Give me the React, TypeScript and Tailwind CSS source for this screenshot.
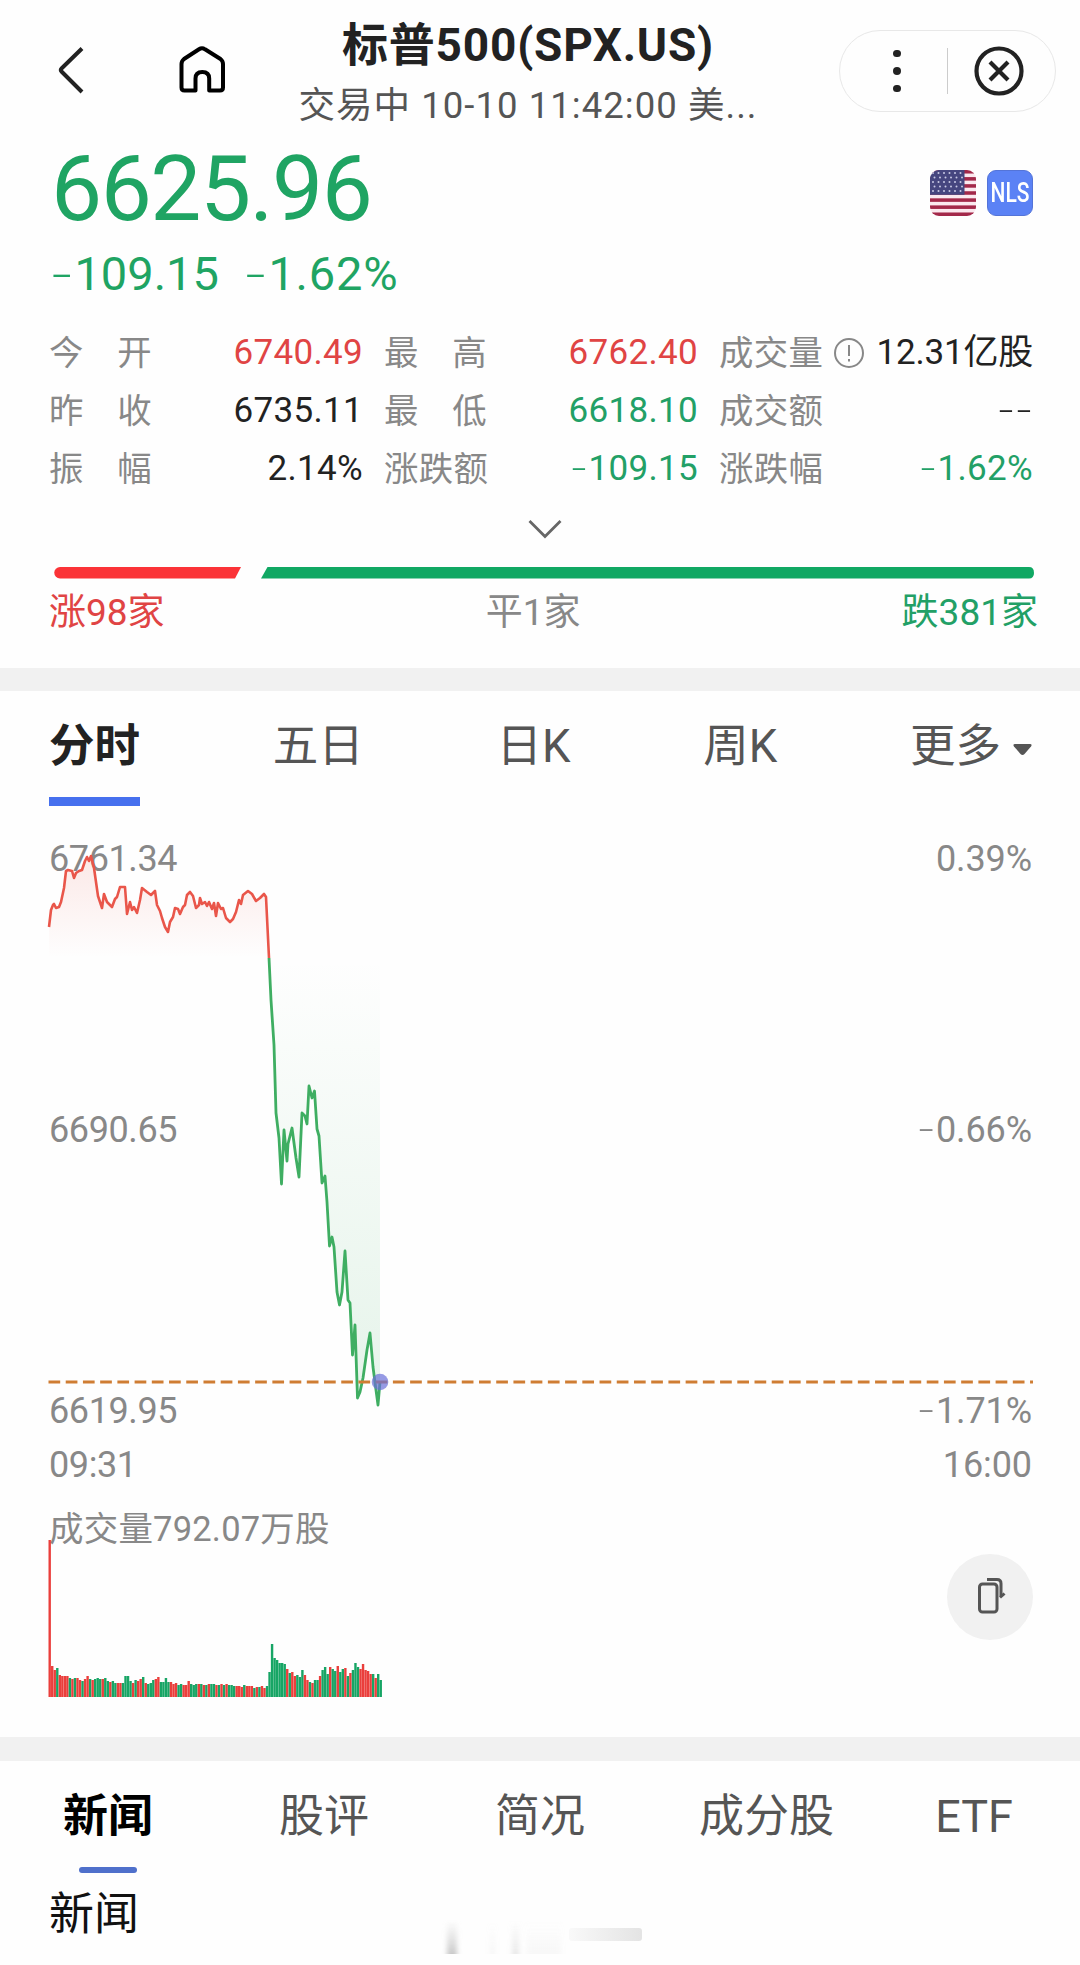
import { useState } from "react";
import clsx from "clsx";

const RED = "#e9564a";
const GREEN = "#3fae62";

const stats = [
  ["今开", "6740.49", "text-[#e04444]", "最高", "6762.40", "text-[#e04444]", "成交量", "12.31亿股", "text-[#222]"],
  ["昨收", "6735.11", "text-[#222]", "最低", "6618.10", "text-[#22a066]", "成交额", "--", "text-[#222]"],
  ["振幅", "2.14%", "text-[#222]", "涨跌额", "-109.15", "text-[#22a066]", "涨跌幅", "-1.62%", "text-[#22a066]"],
];

// Minute line above / below the previous close, in chart pixels (1080 wide, origin at y=830)
const upLine =
  "49,97 51,80 53,75 54,74 56,78 59,77 61,72 64,58 66,41 68,40 72,41 74,48 76,43 79,41 82,40 85,31 87,27 89,31 91,26 94,38 96,52 98,66 102,78 104,64 107,72 112,77 115,69 117,67 120,57 125,57 127,84 130,72 132,80 134,77 137,83 140,70 142,58 147,62 151,65 155,61 157,75 160,81 162,88 165,97 168,102 170,92 173,87 175,78 178,79 180,84 183,77 185,75 187,65 190,62 193,66 196,78 199,75 200,68 202,74 205,72 207,76 209,72 212,79 214,73 216,86 218,73 221,79 223,78 226,88 230,92 233,89 236,82 239,70 241,74 243,65 248,61 252,64 256,71 260,68 264,64 266,67 269,128";
const downLine =
  "269,128 271,170 274,215 276,283 279,308 281.5,354 284,300 287,331 288,314 292,298 296,328 299,347 302,283 305,286 307,294 309,256 312,268 314.5,261 317,299 319,306 322,353 325,346 327,372 329.5,416 332,407 334,417 337,462 339.5,475 342,462 345,421 348,470 350,473 352.5,525 355,495 357.5,568 360,562 363,548 367,520 370,503 373,537 376,560 378,575 380,552";

const volumes = [
  157, 31, 27, 29, 22, 21, 21, 21, 19, 18, 19, 19, 17, 16, 18, 21, 18, 17, 18, 19, 18, 18, 19, 16, 15, 16, 14, 14, 14, 14, 21, 21,
  16, 14, 17, 16, 18, 20, 14, 13, 14, 17, 18, 20, 15, 15, 19, 15, 15, 13, 14, 12, 13, 12, 12, 16, 13, 12, 13, 13, 13, 12, 12, 13,
  13, 13, 12, 12, 13, 12, 13, 12, 12, 11, 11, 11, 10, 12, 11, 11, 11, 9, 10, 10, 11, 9, 11, 25, 53, 39, 37, 34, 34, 33, 28, 24,
  25, 21, 22, 20, 27, 22, 17, 15, 14, 17, 17, 21, 27, 30, 23, 30, 28, 26, 31, 25, 28, 29, 21, 24, 27, 34, 30, 28, 33, 27, 26, 23,
  23, 19, 23, 17,
];
const directions =
  "rrrgrrrrgrgrrgrrgrgggrggrggrrggggrgrrgrgggrrggggrrrggrrrgggrgrgrggrgrgrgggrrrgrrrgrgrrggggggggrgrrgggrrgrggrgggrggrggrgrgggrrrrrgrggr";

const flagStripes = [0, 1, 2, 3, 4, 5, 6];

// Figures are set with a wide, thin minus sign
function Figure({ value }: { value: string }) {
  return (
    <>
      {value.split("").map((c, i) =>
        c === "-" ? (
          <span key={i} className="inline-block w-[0.520em] text-center font-light">
            <span className="inline-block scale-x-150">-</span>
          </span>
        ) : (
          c
        )
      )}
    </>
  );
}

function Header() {
  return (
    <header className="flex h-[134px] items-start">
      <div className="flex w-[290px] items-center pl-[54px] pt-[42px]">
        <svg className="h-14 w-8" viewBox="0 0 32 56" fill="none" stroke="#222" strokeWidth="4" strokeLinejoin="round">
          <path d="M28 6.5 7.5 26.5Q6 28 7.5 29.5L28 50" />
        </svg>
        <svg className="ml-[88px] h-14 w-14" viewBox="0 0 56 56" fill="none" stroke="#000" strokeWidth="4" strokeLinejoin="round">
          <path d="M10.500 48.500Q7.500 48.500 7.500 45.500V22Q7.500 19 10 17L25 7.300Q28 5.300 31 7.300L46.500 17Q49 19 49 22V45.500Q49 48.500 46 48.500H35.200V36.500Q35.200 30 28.300 30Q21.500 30 21.500 36.500V48.500Z" />
        </svg>
      </div>
      <div className="flex w-[476px] flex-col items-center">
        <h1 className="mt-[15px] whitespace-nowrap text-[46px] leading-[60px] font-bold tracking-[0.800px] text-[#222]">标普500(SPX.US)</h1>
        <p className="mt-[5px] whitespace-nowrap text-[36.500px] leading-[52px] tracking-[1.050px] text-[#555]">交易中 10-10 11:42:00 美...</p>
      </div>
      <div className="mt-[30px] ml-[73px] flex h-[82px] w-[217px] items-center rounded-full border border-[#e8e8e8]">
        <div className="flex w-[107px] flex-col items-center gap-[10px] pl-[7px]">
          <span className="h-[7.500px] w-[7.500px] rounded-full bg-[#222]" />
          <span className="h-[7.500px] w-[7.500px] rounded-full bg-[#222]" />
          <span className="h-[7.500px] w-[7.500px] rounded-full bg-[#222]" />
        </div>
        <div className="h-[46px] w-px bg-[#ccc]" />
        <svg className="ml-[26px] h-[50px] w-[50px]" viewBox="0 0 50 50" fill="none" stroke="#222" strokeWidth="4.200">
          <circle cx="25" cy="25" r="22.500" />
          <path d="m16 16 18 18M34 16 16 34" />
        </svg>
      </div>
    </header>
  );
}

function UsFlag() {
  return (
    <svg className="h-[46px] w-[46px] rounded-[9px]" viewBox="0 0 46 46">
      <rect width="46" height="46" fill="#fbe9ef" />
      {flagStripes.map((i) => (
        <rect key={i} y={i * 7.08} width="46" height="3.540" fill="#a3294a" />
      ))}
      <rect width="34.500" height="24.800" fill="#46467f" />
      {[3, 7.500, 12, 16.500, 21].map((y, row) =>
        [3, 8.500, 14, 19.500, 25, 30.500].map((x) => (
          <circle key={`${x}-${y}`} cx={x + (row % 2) * 1.5} cy={y} r="1" fill="#c9c9e4" />
        ))
      )}
    </svg>
  );
}

function Quote() {
  return (
    <section className="flex h-[176px] justify-between pr-[47px] pl-[50px]">
      <div className="text-[#1fa463]">
        <div className="mt-[5px] ml-px text-[91px] leading-[100px] tracking-[-1.500px]">6625.96</div>
        <div className="mt-[7px] flex gap-[25px] text-[47px] leading-[56px]">
          <span>
            <Figure value="-109.15" />
          </span>
          <span className="tracking-[0.800px]">
            <Figure value="-1.62%" />
          </span>
        </div>
      </div>
      <div className="mt-[36px] flex items-start gap-[11px]">
        <UsFlag />
        <div className="flex h-[46px] w-[46px] items-center justify-center rounded-[9px] border border-[#5474d8] bg-[#5b82f5] text-[28px] font-medium text-white">
          <span className="inline-block scale-x-75">NLS</span>
        </div>
      </div>
    </section>
  );
}

function Label({ text }: { text: string }) {
  return (
    <div className="flex w-[103px] justify-between text-[34.400px] text-[#888]">
      {text.split("").map((c) => (
        <span key={c}>{c}</span>
      ))}
    </div>
  );
}

function Stats() {
  return (
    <section className="flex h-[358px] flex-col">
      <div className="flex flex-col pt-[14px]">
        {stats.map((row, i) => (
          <div key={row[0]} className="flex h-[58px] items-center pr-[47px] pl-[49px] text-[35px] leading-[58px] tracking-[0.300px] whitespace-nowrap">
            <Label text={row[0]} />
            <span className={clsx("w-[211px] text-right", row[2])}>
              <Figure value={row[1]} />
            </span>
            <div className="ml-[21px]">
              <Label text={row[3]} />
            </div>
            <span className={clsx("w-[211px] text-right", row[5])}>
              <Figure value={row[4]} />
            </span>
            <div className="ml-[21px]">
              <Label text={row[6]} />
            </div>
            {i === 0 && (
              <svg className="ml-[11px] h-8 w-8 shrink-0" viewBox="0 0 32 32" fill="none" stroke="#888" strokeWidth="2">
                <circle cx="16" cy="16" r="14" />
                <path d="M16 8V19M16 22V24.500" />
              </svg>
            )}
            <span className={clsx("flex-1 text-right", row[8], i === 0 && "tracking-[-0.200px]")}>
              <Figure value={row[7]} />
            </span>
          </div>
        ))}
      </div>
      <svg className="mt-[20px] ml-[525px] h-[24px] w-[40px] shrink-0" viewBox="0 0 40 24" fill="none" stroke="#666" strokeWidth="2.800">
        <path d="m4.500 3 15.500 15.500L35.500 3" />
      </svg>
      <svg className="mt-[25px] ml-[54px] h-[12px] w-[980px] shrink-0" viewBox="0 0 980 12">
        <path d="M6 0H187L181 11.500H6A5.750 5.750 0 0 1 6 0Z" fill="#fb3337" />
        <path d="M213.500 0H975Q980 0 980 5.750T975 11.500H207Z" fill="#10a863" />
      </svg>
      <div className="mt-[7px] flex justify-between pr-[42px] pl-[49px] text-[37px] leading-[54px]">
        <span className="text-[#e04444]">涨98家</span>
        <span className="text-[#888]">平1家</span>
        <span className="text-[#22a066]">跌381家</span>
      </div>
    </section>
  );
}

function ChartTabs() {
  const tabs = ["分时", "五日", "日K", "周K", "更多"];
  const [active, setActive] = useState("分时");

  return (
    <nav className="flex h-[116px] items-start justify-between pr-[48px] pl-[49px] text-[45.500px]">
      {tabs.map((tab) => (
        <button
          key={tab}
          onClick={() => setActive(tab)}
          className={clsx(
            "flex h-[115px] items-center border-b-[9px] pt-[7px]",
            tab === active ? "border-[#4670ee] font-bold text-[#222]" : "border-transparent text-[#555]"
          )}
        >
          {tab}
          {tab === "更多" && (
            <svg className="mt-1 ml-[12px] h-3 w-[19px]" viewBox="0 0 19 12" fill="#555">
              <path d="M2 0H17Q19.500 0 18 2.500L11.500 10Q9.500 12 7.500 10L1 2.500Q-.5 0 2 0Z" />
            </svg>
          )}
        </button>
      ))}
    </nav>
  );
}

function AxisRow({ left, right }: { left: string; right: string }) {
  return (
    <div className="flex h-[50px] items-center justify-between">
      <span className="tracking-[-0.400px]">{left}</span>
      <span className="tracking-[-0.100px]">
        <Figure value={right} />
      </span>
    </div>
  );
}

function PriceChart() {
  return (
    <section className="relative h-[682px] pr-[48px] pl-[49px] text-[36px] leading-[50px] text-[#888]">
      <div className="pt-[27px]">
        <AxisRow left="6761.34" right="0.39%" />
      </div>
      <div className="pt-[221px]">
        <AxisRow left="6690.65" right="-0.66%" />
      </div>
      <div className="pt-[231px]">
        <AxisRow left="6619.95" right="-1.71%" />
      </div>
      <div className="pt-[4px]">
        <AxisRow left="09:31" right="16:00" />
      </div>
      <svg className="absolute top-[23px] left-0 h-[600px] w-[1080px]" viewBox="0 0 1080 600" fill="none" strokeLinejoin="round">
        <defs>
          <linearGradient id="up" gradientUnits="userSpaceOnUse" x1="0" y1="26" x2="0" y2="128">
            <stop offset="0" stopColor={RED} stopOpacity="0.130" />
            <stop offset="1" stopColor={RED} stopOpacity="0" />
          </linearGradient>
          <linearGradient id="down" gradientUnits="userSpaceOnUse" x1="0" y1="128" x2="0" y2="575">
            <stop offset="0" stopColor={GREEN} stopOpacity="0" />
            <stop offset="1" stopColor={GREEN} stopOpacity="0.130" />
          </linearGradient>
        </defs>
        <path d={`M49,128 ${upLine}Z`} fill="url(#up)" />
        <path d={`M${downLine} 380,128Z`} fill="url(#down)" />
        <polyline points={upLine} stroke={RED} strokeWidth="2.600" />
        <polyline points={downLine} stroke={GREEN} strokeWidth="2.800" />
        <path d="M48.500 552H1033" stroke="#cf7d33" strokeWidth="3" strokeDasharray="11.700 5.520" />
        <circle cx="380" cy="552" r="8.300" fill="#6a6fd8" fillOpacity="0.700" />
      </svg>
    </section>
  );
}

function VolumeChart() {
  return (
    <section className="relative flex h-[248px] items-start justify-between pr-[47px] pl-[49px]">
      <span className="mt-[15px] text-[34.500px] leading-[50px] tracking-[0.200px] text-[#888]">成交量792.07万股</span>
      <svg className="absolute top-[50px] left-[48px] h-[158px] w-[336px]" viewBox="0 0 336 158">
        {volumes.map((v, i) => (
          <rect key={i} x={0.5 + i * 2.527} y={158 - v} width="2.400" height={v} fill={directions[i] === "r" ? "#ea3f3c" : "#17a565"} />
        ))}
      </svg>
      <button className="mt-[65px] flex h-[86px] w-[86px] items-center justify-center rounded-full bg-[#f1f1f1]">
        <svg className="h-[44px] w-[44px]" viewBox="0 0 44 44" fill="none" stroke="#555" strokeWidth="3">
          <rect x="11.500" y="9" width="17.500" height="28" rx="3" />
          <path d="M19 4.500H29Q33 4.500 33 8.500V21" />
          <path d="M32 22.500 36.500 18.500" />
        </svg>
      </button>
    </section>
  );
}

function InfoTabs() {
  return (
    <nav className="flex h-[113px] text-[45px] leading-[112px] text-[#555]">
      <div className="flex w-[216px] flex-col items-center font-bold text-black">
        <span>新闻</span>
        <span className="-mt-[6px] h-[6px] w-[58px] rounded-full bg-[#4f70cb]" />
      </div>
      <span className="w-[216px] text-center">股评</span>
      <span className="w-[216px] text-center">简况</span>
      <span className="w-[237px] text-center">成分股</span>
      <span className="w-[178px] text-center">ETF</span>
    </nav>
  );
}

export default function App() {
  return (
    <main className="h-[1965px] w-[1080px] overflow-hidden bg-[#fefefe] font-[Roboto,'Noto_Sans_CJK_SC',sans-serif]">
      <Header />
      <Quote />
      <Stats />
      <div className="h-[23px] bg-[#f1f1f1]" />
      <ChartTabs />
      <PriceChart />
      <VolumeChart />
      <div className="h-[24px] bg-[#f1f1f1]" />
      <InfoTabs />
      <div className="flex items-start pl-[49px] text-[45px] leading-[82px] text-[#111]">
        <span>新闻</span>
        <svg className="mt-[46px] ml-[302px] h-9 w-[206px]" viewBox="0 0 206 36">
          <defs>
            <linearGradient id="fade" x1="0" y1="0" x2="0" y2="1">
              <stop offset="0" stopColor="#ccc" stopOpacity="0" />
              <stop offset="1" stopColor="#bbb" stopOpacity="0.800" />
            </linearGradient>
            <linearGradient id="tail" x1="0" y1="0" x2="1" y2="0">
              <stop offset="0" stopColor="#ddd" stopOpacity="0.150" />
              <stop offset="1" stopColor="#ddd" stopOpacity="0.800" />
            </linearGradient>
            <filter id="smear" x="-50%" width="200%" y="0" height="100%">
              <feGaussianBlur stdDeviation="2.500 0.300" />
            </filter>
          </defs>
          <g filter="url(#smear)">
            <rect x="6" width="10" height="34" fill="url(#fade)" />
            <rect x="49" width="5" height="34" fill="url(#fade)" opacity="0.150" />
            <rect x="71" width="7" height="34" fill="url(#fade)" opacity="0.400" />
            <rect x="86" width="34" height="34" fill="url(#fade)" opacity="0.120" />
          </g>
          <rect x="128" y="8" width="73" height="13" rx="3" fill="url(#tail)" />
        </svg>
      </div>
    </main>
  );
}
